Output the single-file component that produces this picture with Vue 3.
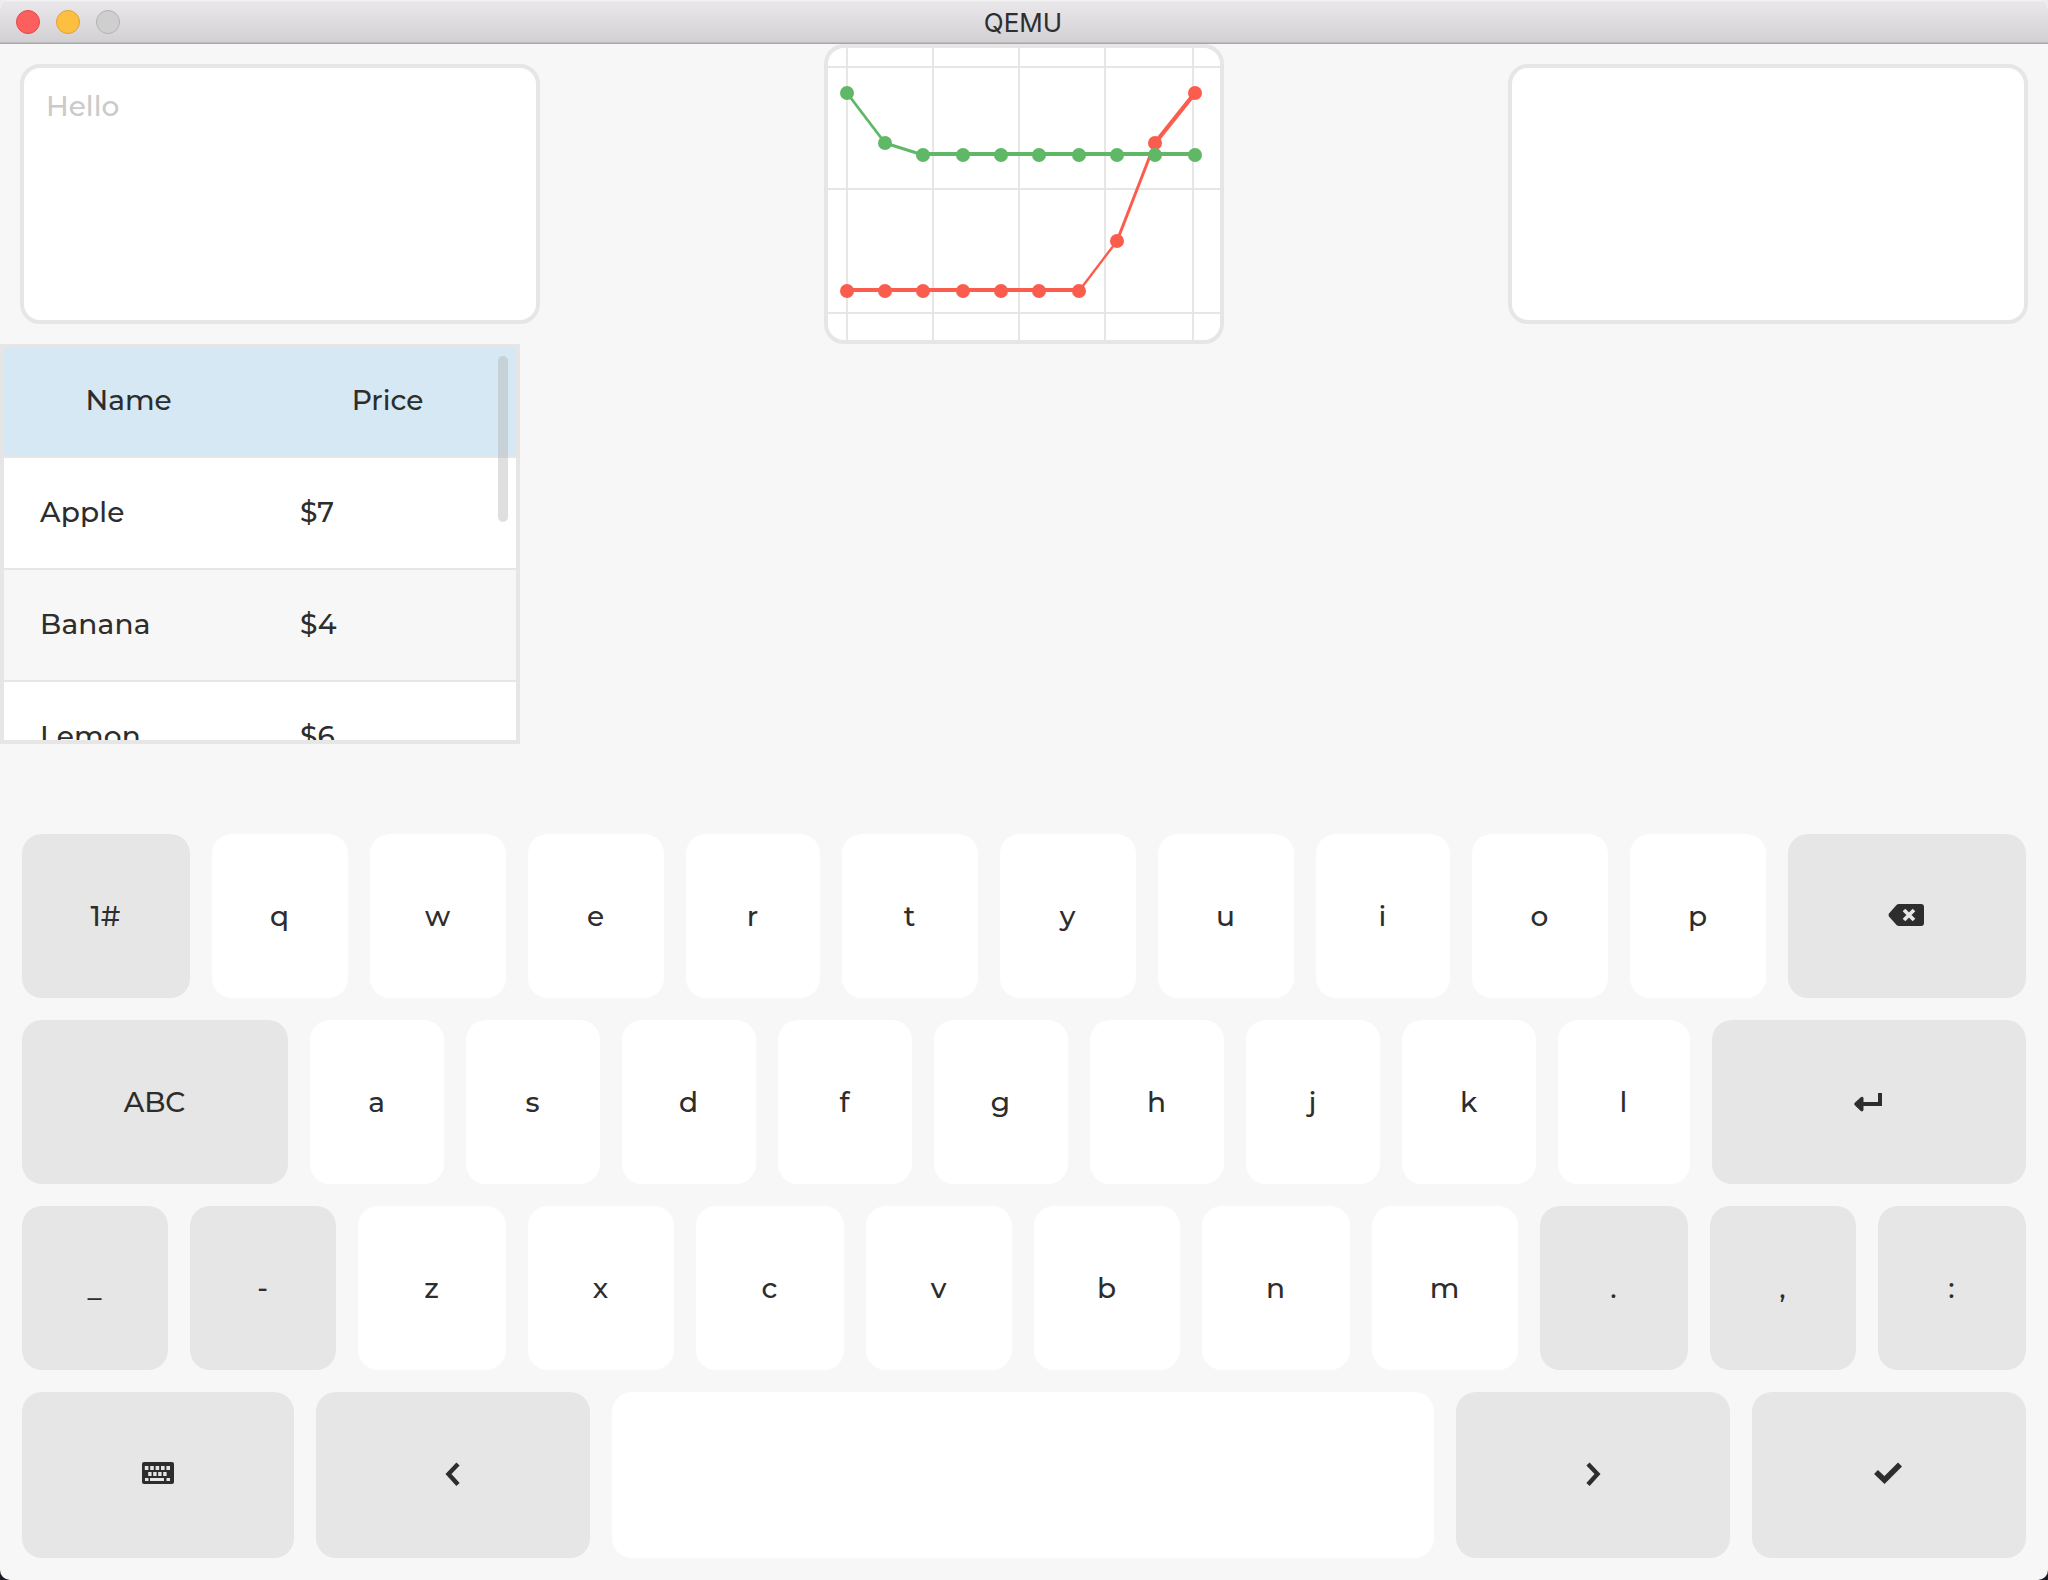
<script setup>
const xs = [19, 57, 95, 135, 173, 211, 251, 289, 327, 367]
const greenYs = [45, 95, 107, 107, 107, 107, 107, 107, 107, 107]
const redYs = [243, 243, 243, 243, 243, 243, 243, 193, 95, 45]
const gridX = [19, 105, 191, 277, 365]
const gridY = [19, 141, 265]

// flat segments are drawn heavier than the sloped ones
function makeSeries(name, ys, slopedWidths) {
  const points = xs.map((x, i) => ({ x, y: ys[i] }))
  const segments = points.slice(1).map((p, i) => {
    const q = points[i]
    const flat = q.y === p.y
    return {
      x1: q.x, y1: flat ? q.y - 1 : q.y, x2: p.x, y2: flat ? p.y - 1 : p.y,
      w: flat ? 4 : slopedWidths[i] || 3
    }
  })
  return { name, points, segments }
}
const series = [
  makeSeries('red', redYs, { 6: 2.4, 7: 3, 8: 4.4 }),
  makeSeries('green', greenYs, { 0: 2.8, 1: 3 })
]

const rows = [
  ['Apple', '$7'],
  ['Banana', '$4'],
  ['Lemon', '$6']
]

const k = (label, w, ctrl = false) => ({ label, w, ctrl })
const icon = (name, w) => ({ icon: name, w, ctrl: true })
const keyboard = [
  [k('1#', 168, true), k('q', 136), k('w', 136), k('e', 136), k('r', 134), k('t', 136), k('y', 136), k('u', 136), k('i', 134), k('o', 136), k('p', 136), icon('backspace', 238)],
  [k('ABC', 266, true), k('a', 134), k('s', 134), k('d', 134), k('f', 134), k('g', 134), k('h', 134), k('j', 134), k('k', 134), k('l', 132), icon('enter', 314)],
  [k('_', 146, true), k('-', 146, true), k('z', 148), k('x', 146), k('c', 148), k('v', 146), k('b', 146), k('n', 148), k('m', 146), k('.', 148, true), k(',', 146, true), k(':', 148, true)],
  [icon('keyboard', 272), icon('left', 274), k('', 822), icon('right', 274), icon('check', 274)]
]
</script>

<template>
  <div class="window">
    <header class="titlebar">
      <div class="lights">
        <span class="light close"></span>
        <span class="light minimize"></span>
        <span class="light zoom"></span>
      </div>
      <div class="title">QEMU</div>
      <div class="lights-spacer"></div>
    </header>

    <main class="widgets">
      <div class="textarea">Hello</div>
      <div class="chart">
        <svg width="392" height="292" viewBox="0 0 392 292">
          <g class="grid">
            <line v-for="x in gridX" :key="'x' + x" :x1="x" y1="0" :x2="x" y2="292" />
            <line v-for="y in gridY" :key="'y' + y" x1="0" :y1="y" x2="392" :y2="y" />
          </g>
          <g v-for="s in series" :key="s.name" :class="s.name">
            <line v-for="(g, i) in s.segments" :key="'s' + i" :x1="g.x1" :y1="g.y1" :x2="g.x2" :y2="g.y2" :stroke-width="g.w" />
            <circle v-for="(p, i) in s.points" :key="'p' + i" :cx="p.x" :cy="p.y" r="7" />
          </g>
        </svg>
      </div>
      <div class="textarea"></div>
    </main>

    <section class="table">
      <div class="row head">
        <div class="cell">Name</div>
        <div class="cell">Price</div>
      </div>
      <div v-for="r in rows" :key="r[0]" class="row">
        <div class="cell">{{ r[0] }}</div>
        <div class="cell">{{ r[1] }}</div>
      </div>
      <div class="scrollbar"></div>
    </section>

    <section class="keyboard">
      <div v-for="(line, i) in keyboard" :key="i" class="keyrow">
        <div v-for="(key, j) in line" :key="j" class="key" :class="{ ctrl: key.ctrl }" :style="{ width: key.w + 'px' }">
          <svg v-if="key.icon === 'backspace'" class="shift" width="36" height="24" viewBox="0 0 36 24">
            <path fill="currentColor" d="M11 0H33Q36 0 36 3V19Q36 22 33 22H11Q9.500 22 8.500 21L1 12.500Q0 11 1 9.500L8.500 1Q9.500 0 11 0Z" />
            <path class="knock" d="M16 6L26 16M26 6L16 16" />
          </svg>
          <svg v-else-if="key.icon === 'enter'" class="shift" width="28" height="20" viewBox="0 -1 28 20">
            <path fill="currentColor" d="M24 0H28V13H9.500V17Q8.500 19.500 6.500 17.700L.8 12.300Q-.3 11 .8 9.700L6.500 4.500Q8.500 3 9.500 5V9H24Z" />
          </svg>
          <svg v-else-if="key.icon === 'keyboard'" width="32" height="26" viewBox="0 0 32 26">
            <rect x="0" y="0" width="32" height="22" rx="2" fill="currentColor" />
            <g class="caps">
              <rect v-for="n in 5" :key="n" :x="n * 5.400 - 2.600" y="4" width="3.600" height="4" />
              <rect v-for="n in 4" :key="'m' + n" :x="n * 5 + 1.200" y="10" width="3.400" height="4" />
              <rect x="3" y="16" width="3.500" height="3" />
              <rect x="8" y="16" width="14" height="3" />
              <rect x="24.500" y="16" width="3.500" height="3" />
            </g>
          </svg>
          <svg v-else-if="key.icon === 'left'" width="16" height="26" viewBox="0 0 16 26">
            <path class="stroke" d="M13 2L3.500 12L13 22.500" />
          </svg>
          <svg v-else-if="key.icon === 'right'" width="16" height="26" viewBox="0 0 16 26">
            <path class="stroke" d="M3 2L12.500 12L3 22.500" />
          </svg>
          <svg v-else-if="key.icon === 'check'" class="shift" width="28" height="26" viewBox="0 0 28 26">
            <path class="stroke thick" d="M2 10L10.500 18L26 2.500" />
          </svg>
          <span v-else class="shift">{{ key.label }}</span>
        </div>
      </div>
    </section>
  </div>
</template>

<style>
body {
  background: linear-gradient(#eeedee 50%, #1c1a24 50%);
}
</style>

<style scoped>
.window {
  width: 2048px;
  height: 1580px;
  box-sizing: border-box;
  overflow: hidden;
  border-radius: 10px;
  background: #f7f7f7;
  display: flex;
  flex-direction: column;
  font-family: Montserrat, Inter, "Open Sans", sans-serif;
  font-size: 28px;
  font-weight: 500;
  line-height: 34px;
  color: #2d2d2d;
}
.titlebar {
  flex: none;
  height: 44px;
  box-sizing: border-box;
  padding: 0 18px 0 16px;
  display: flex;
  align-items: center;
  justify-content: space-between;
  background: linear-gradient(#f6f5f6 0, #e8e6e9 2px, #e5e3e6 10px, #d2d0d3 42px, #bdbbbd 42px, #bdbbbd 43px, #a9a8a9 43px);
}
.lights,
.lights-spacer {
  width: 104px;
  display: flex;
  gap: 16px;
}
.light {
  width: 24px;
  height: 24px;
  box-sizing: border-box;
  border-radius: 50%;
  border: 1px solid;
}
.close { background: #fd605c; border-color: #e2474a; }
.minimize { background: #fdbf40; border-color: #df9f38; }
.zoom { background: #cfcfcf; border-color: #b2b1b3; }
.title {
  padding-top: 1px;
  font-family: Inter, sans-serif;
  font-weight: 400;
  font-size: 26px;
  line-height: 43px;
  color: #2e2d2f;
}
.widgets {
  flex: none;
  height: 300px;
  padding: 0 20px;
  display: flex;
  justify-content: space-between;
}
.textarea {
  width: 520px;
  height: 260px;
  margin-top: 20px;
  box-sizing: border-box;
  border: 4px solid #e6e6e6;
  border-radius: 20px;
  background: #fff;
  padding: 21px 22px;
  color: #cacaca;
}
.chart {
  width: 400px;
  height: 300px;
  box-sizing: border-box;
  border: 4px solid #e6e6e6;
  border-radius: 20px;
  background: #fff;
  overflow: hidden;
}
svg { display: block; }
.grid line { stroke: #e6e6e6; stroke-width: 2; }
.red line { stroke: #fa5d4d; }
.red circle { fill: #fa5d4d; }
.green line { stroke: #5fb866; }
.green circle { fill: #5fb866; }
.table {
  position: relative;
  flex: none;
  width: 520px;
  height: 400px;
  box-sizing: border-box;
  border: 4px solid #e6e6e6;
  background: #fff;
  overflow: hidden;
}
.row {
  height: 112px;
  box-sizing: border-box;
  padding-bottom: 2px;
  border-top: 2px solid #e6e6e6;
  display: flex;
  align-items: center;
  letter-spacing: 0.2px;
}
.row:nth-child(3) { background: #f7f7f7; }
.cell {
  width: 260px;
  box-sizing: border-box;
  padding-left: 42px;
}
.cell:first-child {
  width: 256px;
  padding-left: 36px;
}
.row.head {
  height: 108px;
  border-top: 0;
  padding-bottom: 4px;
  background: #d6e8f4;
  letter-spacing: 0;
}
.head .cell {
  padding-left: 1px;
  text-align: center;
}
.head .cell:first-child {
  padding-left: 0;
  padding-right: 5px;
}
.scrollbar {
  position: absolute;
  right: 8px;
  top: 8px;
  width: 10px;
  height: 166px;
  border-radius: 5px;
  background: rgba(175, 175, 175, 0.4);
}
.keyboard {
  flex: 1;
  box-sizing: border-box;
  padding: 90px 22px 22px;
  display: flex;
  flex-direction: column;
  gap: 22px;
}
.keyrow {
  height: 164px;
  display: flex;
  gap: 22px;
}
.keyrow:last-child { height: 166px; }
.key {
  flex: none;
  box-sizing: border-box;
  border-radius: 20px;
  background: #fff;
  display: flex;
  align-items: center;
  justify-content: center;
}
.key.ctrl { background: #e6e6e6; }
.shift { margin-right: 2px; }
span.shift { margin-right: 1px; }
.knock { fill: none; stroke: #e6e6e6; stroke-width: 3.800; }
.caps rect { fill: #e6e6e6; }
.stroke { fill: none; stroke: currentColor; stroke-width: 4.400; }
.stroke.thick { stroke-width: 5.600; }
</style>
